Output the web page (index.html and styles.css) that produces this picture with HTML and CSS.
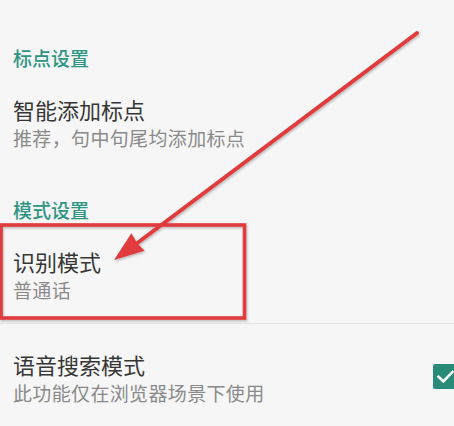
FILE: index.html
```html
<!DOCTYPE html>
<html lang="zh-CN">
<head>
<meta charset="utf-8">
<link rel="stylesheet" href="styles.css">
</head>
<body>
<div class="screen">
  <section class="category">
    <div class="cat-title">标点设置</div>
    <div class="pref">
      <div class="pref-text">
        <div class="pref-title">智能添加标点</div>
        <div class="pref-summary">推荐，句中句尾均添加标点</div>
      </div>
    </div>
  </section>
  <section class="category second">
    <div class="cat-title">模式设置</div>
    <div class="pref">
      <div class="pref-text">
        <div class="pref-title">识别模式</div>
        <div class="pref-summary">普通话</div>
      </div>
    </div>
    <div class="divider"></div>
    <div class="pref pref-check">
      <div class="pref-text">
        <div class="pref-title">语音搜索模式</div>
        <div class="pref-summary">此功能仅在浏览器场景下使用</div>
      </div>
      <div class="checkbox">
        <svg viewBox="0 0 25 25" width="25" height="25"><path d="M5.5 12.8 L10.3 17.5 L19.5 8" fill="none" stroke="#ffffff" stroke-width="2.6" stroke-linecap="square"/></svg>
      </div>
    </div>
  </section>
  <svg class="annotation" width="454" height="426" viewBox="0 0 454 426">
    <defs>
      <filter id="sh" x="-10%" y="-10%" width="120%" height="120%">
        <feDropShadow dx="1" dy="1.5" stdDeviation="1" flood-color="#000" flood-opacity="0.25"/>
      </filter>
    </defs>
    <g filter="url(#sh)">
      <rect x="1" y="225" width="243.5" height="93" fill="none" stroke="#e03a3c" stroke-width="3.6"/>
      <line x1="417" y1="33" x2="128" y2="250" stroke="#e03a3c" stroke-width="4" stroke-linecap="round"/>
      <polygon points="114,260 131.4,233.2 137,243 144.6,250.8" fill="#e03a3c"/>
    </g>
  </svg>
</div>
</body>
</html>
```
FILE: styles.css
```css
html, body {
  margin: 0;
  padding: 0;
  background: #f6f6f6;
  overflow: hidden;
}
.screen {
  position: relative;
  width: 454px;
  height: 426px;
  padding-top: 46px;
  box-sizing: border-box;
  font-family: "Noto Sans CJK SC", "Noto Sans", sans-serif;
}
.category.second {
  margin-top: 27px;
}
.cat-title {
  padding: 0 13px;
  height: 24px;
  line-height: 24px;
  font-size: 19px;
  font-weight: 500;
  color: #2f9583;
}
.pref {
  display: flex;
  align-items: center;
  padding: 25px 13px 21px;
}
.pref-check {
  padding-top: 26px;
  padding-right: 0;
}
.pref-text {
  flex: 1;
  display: flex;
  flex-direction: column;
  gap: 3px;
}
.pref-title {
  font-size: 22px;
  line-height: 28px;
  color: #363636;
}
.pref-summary {
  font-size: 19px;
  line-height: 24px;
  letter-spacing: 0.35px;
  color: #8a8a8a;
}
.divider {
  height: 1px;
  background: #e4e4e4;
}
.checkbox {
  width: 25px;
  height: 25px;
  margin-right: -4px;
  margin-top: -2px;
  border-radius: 2px;
  background: #2a8a78;
  flex: none;
}
.checkbox svg {
  display: block;
}
.annotation {
  position: absolute;
  left: 0;
  top: 0;
  pointer-events: none;
}
```
